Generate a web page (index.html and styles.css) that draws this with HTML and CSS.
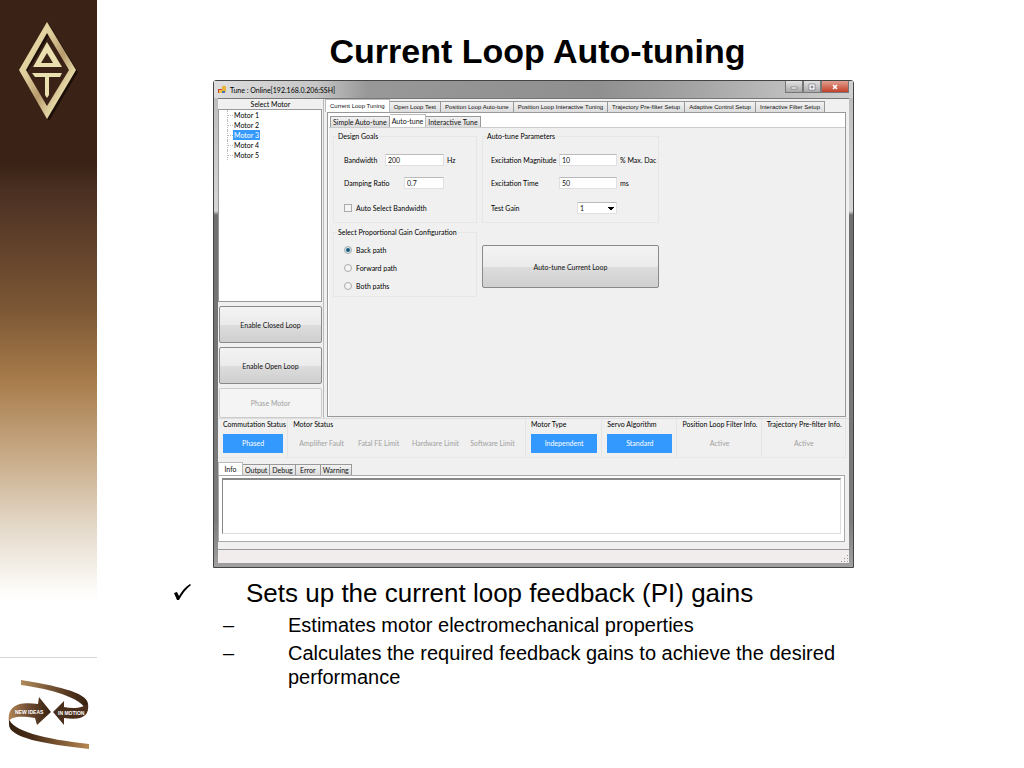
FILE: index.html
```html
<!DOCTYPE html>
<html lang="en">
<head>
    <meta charset="UTF-8">
    <meta name="viewport" content="width=device-width, initial-scale=1.0">
    <title>Current Loop Auto-tuning</title>
    <link rel="stylesheet" href="styles.css">
</head>
<body>
<div class="slide">
    <aside class="brand">
        <div class="brand-top">
            <svg class="logo" viewBox="0 0 60 102" role="img" aria-label="AT logo">
                <defs>
                    <linearGradient id="gold" x1="0" y1="0" x2="1" y2="1">
                        <stop offset="0" stop-color="#f6edbb"/>
                        <stop offset="0.35" stop-color="#dccb98"/>
                        <stop offset="0.55" stop-color="#b89b6d"/>
                        <stop offset="0.8" stop-color="#f3e9b8"/>
                        <stop offset="1" stop-color="#c9b07e"/>
                    </linearGradient>
                </defs>
                <path d="M31 4 L60 52 L31 101 L3 52 Z M31 15 L9 52 L31 89 L53 52 Z" fill="#1c0f08" fill-rule="evenodd"/>
                <path d="M29 2 L58 50 L29 99 L1 50 Z M29 13 L8 50 L29 86 L51 50 Z" fill="url(#gold)" fill-rule="evenodd"/>
                <path d="M29 22 L44 47 L15 47 Z M29 33 L23 43 L35 43 Z" fill="#eadfae" fill-rule="evenodd"/>
                <path d="M14 53 L44 53 L42 57 L31 57 L31 75 L29 78 L27 75 L27 57 L17 57 Z" fill="#eadfae"/>
            </svg>
        </div>
        <div class="brand-bottom">
            <svg class="motion" viewBox="0 0 96 96" role="img" aria-label="New ideas in motion">
                <defs>
                    <linearGradient id="band1" x1="0" x2="1">
                        <stop offset="0" stop-color="#b18b5c"/>
                        <stop offset="0.7" stop-color="#54371f"/>
                        <stop offset="1" stop-color="#35200f"/>
                    </linearGradient>
                    <linearGradient id="band2" x1="0" x2="1">
                        <stop offset="0" stop-color="#35200f"/>
                        <stop offset="0.3" stop-color="#4a2d18"/>
                        <stop offset="1" stop-color="#b58650"/>
                    </linearGradient>
                    <linearGradient id="arrow" x1="0" x2="1">
                        <stop offset="0" stop-color="#b18455"/>
                        <stop offset="0.5" stop-color="#6b4a30"/>
                        <stop offset="1" stop-color="#35200f"/>
                    </linearGradient>
                </defs>
                <path d="M21 22 C52 27 88 34 88 46 L87 53 C81 39 50 31 21 27 Z" fill="url(#band1)"/>
                <path d="M9 60 C11 73 44 81 89 86 L89 91 C45 86 8 80 9 66 Z" fill="url(#band2)"/>
                <path d="M9 64 C7 48 18 43 38 46 L39 39 L51 54 L37 67 L35 60 C22 58 10 58 9 64 Z" fill="url(#arrow)"/>
                <path d="M53 54 L64 43 L64 49 C74 51 84 50 88 45 C90 60 80 62 64 60 L64 67 Z" fill="#492e1c"/>
                <text x="15" y="56" class="motion-text">NEW IDEAS</text>
                <text x="58" y="57" class="motion-text">IN MOTION</text>
            </svg>
        </div>
    </aside>

    <main class="content">
        <h1>Current Loop Auto-tuning</h1>

        <section class="window">
            <header class="titlebar">
                <svg class="app-icon" viewBox="0 0 8 8" aria-hidden="true">
                    <rect x="0" y="3" width="4" height="4" fill="#c9463a"/>
                    <rect x="1" y="4" width="3" height="3" fill="#f0c040"/>
                    <rect x="4" y="0" width="4" height="6" fill="#e6b53a"/>
                    <rect x="4" y="5" width="3" height="2" fill="#4b73b8"/>
                </svg>
                <span class="window-title">Tune : Online[192.168.0.206:SSH]</span>
                <div class="window-buttons">
                    <button type="button" aria-label="Minimize"><svg viewBox="0 0 10 8"><path d="M2 4h6v2H2z" fill="#fff" stroke="#667" stroke-width="0.6"/></svg></button>
                    <button type="button" aria-label="Maximize"><svg viewBox="0 0 10 8"><path d="M2 1h6v6H2zM4 3h2v2H4z" fill="#fff" fill-rule="evenodd" stroke="#667" stroke-width="0.6"/></svg></button>
                    <button type="button" class="close" aria-label="Close"><svg viewBox="0 0 10 8"><path d="M3 2l4 4M7 2L3 6" stroke="#fff" stroke-width="1.6"/></svg></button>
                </div>
            </header>

            <div class="window-body">
                <div class="workspace">
                    <div class="motors">
                        <div class="motors-title">Select Motor</div>
                        <ul class="motor-list">
                            <li><span>Motor 1</span></li>
                            <li><span>Motor 2</span></li>
                            <li><span class="selected">Motor 3</span></li>
                            <li><span>Motor 4</span></li>
                            <li><span>Motor 5</span></li>
                        </ul>
                        <div class="motor-buttons">
                            <button type="button" class="big-button">Enable Closed Loop</button>
                            <button type="button" class="big-button">Enable Open Loop</button>
                            <button type="button" class="big-button" disabled>Phase Motor</button>
                        </div>
                    </div>

                    <div class="tuning">
                        <nav class="tabs outer">
                            <button type="button" class="tab active">Current Loop Tuning</button>
                            <button type="button" class="tab">Open Loop Test</button>
                            <button type="button" class="tab">Position Loop Auto-tune</button>
                            <button type="button" class="tab">Position Loop Interactive Tuning</button>
                            <button type="button" class="tab">Trajectory Pre-filter Setup</button>
                            <button type="button" class="tab">Adaptive Control Setup</button>
                            <button type="button" class="tab">Interactive Filter Setup</button>
                        </nav>
                        <div class="tab-page">
                            <nav class="tabs inner">
                                <button type="button" class="tab">Simple Auto-tune</button>
                                <button type="button" class="tab active">Auto-tune</button>
                                <button type="button" class="tab">Interactive Tune</button>
                            </nav>
                            <form class="tune-form">
                                <fieldset>
                                    <legend>Design Goals</legend>
                                    <div class="rows goals">
                                        <label for="bandwidth">Bandwidth</label>
                                        <input type="text" id="bandwidth" value="200">
                                        <span>Hz</span>
                                        <label for="damping">Damping Ratio</label>
                                        <input type="text" id="damping" class="short" value="0.7">
                                        <span></span>
                                        <label class="check"><input type="checkbox">Auto Select Bandwidth</label>
                                    </div>
                                </fieldset>
                                <fieldset>
                                    <legend>Auto-tune Parameters</legend>
                                    <div class="rows params">
                                        <label for="magnitude">Excitation Magnitude</label>
                                        <input type="text" id="magnitude" value="10">
                                        <span>% Max. Dac</span>
                                        <label for="time">Excitation Time</label>
                                        <input type="text" id="time" value="50">
                                        <span>ms</span>
                                        <label for="gain">Test Gain</label>
                                        <select id="gain" class="short"><option>1</option></select>
                                        <span></span>
                                    </div>
                                </fieldset>
                                <fieldset>
                                    <legend>Select Proportional Gain Configuration</legend>
                                    <div class="radios">
                                        <label class="check"><input type="radio" name="path" checked>Back path</label>
                                        <label class="check"><input type="radio" name="path">Forward path</label>
                                        <label class="check"><input type="radio" name="path">Both paths</label>
                                    </div>
                                </fieldset>
                                <button type="button" class="big-button run-button">Auto-tune Current Loop</button>
                            </form>
                        </div>
                    </div>
                </div>

                <div class="status">
                    <div class="status-group">
                        <h2>Commutation Status</h2>
                        <div class="cells"><span class="on">Phased</span></div>
                    </div>
                    <div class="status-group">
                        <h2>Motor Status</h2>
                        <div class="cells">
                            <span>Amplifier Fault</span>
                            <span>Fatal FE Limit</span>
                            <span>Hardware Limit</span>
                            <span>Software Limit</span>
                        </div>
                    </div>
                    <div class="status-group">
                        <h2>Motor Type</h2>
                        <div class="cells"><span class="on">Independent</span></div>
                    </div>
                    <div class="status-group">
                        <h2>Servo Algorithm</h2>
                        <div class="cells"><span class="on">Standard</span></div>
                    </div>
                    <div class="status-group">
                        <h2>Position Loop Filter Info.</h2>
                        <div class="cells"><span>Active</span></div>
                    </div>
                    <div class="status-group">
                        <h2>Trajectory Pre-filter Info.</h2>
                        <div class="cells"><span>Active</span></div>
                    </div>
                </div>

                <nav class="tabs log-tabs">
                    <button type="button" class="tab active">Info</button>
                    <button type="button" class="tab">Output</button>
                    <button type="button" class="tab">Debug</button>
                    <button type="button" class="tab">Error</button>
                    <button type="button" class="tab">Warning</button>
                </nav>
                <div class="log">
                    <textarea aria-label="Info"></textarea>
                </div>
                <footer class="statusbar">
                    <svg viewBox="0 0 8 8" aria-hidden="true"><path d="M6 0h1v1H6zM3 3h1v1H3zM6 3h1v1H6zM0 6h1v1H0zM3 6h1v1H3zM6 6h1v1H6z" fill="#999"/></svg>
                </footer>
            </div>
        </section>

        <ul class="points">
            <li class="point">
                <svg class="tick" viewBox="0 0 18 18" aria-hidden="true"><path d="M1 9 L4 8 L6 12 C9 7 12 3 17 0 L18 1 C13 5 9 10 6 16 L4 16 Z"/></svg>
                <span>Sets up the current loop feedback (PI) gains</span>
            </li>
            <li class="subpoint"><span class="dash">–</span><span>Estimates motor electromechanical properties</span></li>
            <li class="subpoint"><span class="dash">–</span><span>Calculates the required feedback gains to achieve the desired performance</span></li>
        </ul>
    </main>
</div>
</body>
</html>
```
FILE: styles.css
```css
* {
    box-sizing: border-box;
}

body {
    margin: 0;
    font-family: "Liberation Sans", Arial, sans-serif;
    background-color: #fff;
    color: #000;
}

.slide {
    display: flex;
    min-height: 100vh;
}

/* left brand strip */
.brand {
    flex: 0 0 97px;
    display: flex;
    flex-direction: column;
}

.brand-top {
    flex: 1;
    padding: 20px 0 0 18px;
    background: linear-gradient(#3a2316 0, #3a2316 25%, #4a2f22 29%, #7c5735 47%, #a87c4b 58%, #c7a985 69%, #e6dccd 81%, #fdfcf9 90%, #fff 92%);
}

.logo {
    display: block;
    width: 60px;
    height: 102px;
}

.brand-bottom {
    height: 111px;
    border-top: 1px solid #d4d4d4;
}

.motion {
    display: block;
    width: 96px;
    height: 96px;
}

.motion-text {
    font-size: 5px;
    font-weight: bold;
    fill: #fff;
}

/* slide content */
.content {
    flex: 1;
    min-width: 0;
    padding: 30px 170px 0 76px;
}

h1 {
    margin: 0 0 8px 48px;
    font-size: 34px;
    line-height: 42px;
    text-align: center;
}

.window {
    margin-left: 40px;
    padding: 0 4px 4px;
    border: 1px solid #444;
    border-radius: 3px 3px 0 0;
    background: linear-gradient(#b9b9b9 0, #d6d6d6 130px, #707070 134px, #7c7c7c 440px, #a0a0a0 100%);
    font-family: Lato, "Liberation Sans", sans-serif;
    font-size: 7px;
    line-height: 10px;
}

.titlebar {
    display: flex;
    align-items: center;
    height: 17px;
    margin: 0 -4px;
    padding: 0 4px;
    background: linear-gradient(90deg, #dedede 0, #c6c6c6 16%, #989898 24%, #8f8f8f 60%, #a4a4a4 75%, #d0d0d0 100%);
}

.app-icon {
    width: 8px;
    height: 8px;
    margin-right: 4px;
}

.window-title {
    flex: 1;
}

.window-buttons {
    display: flex;
    align-self: flex-start;
}

.window-buttons button {
    display: flex;
    align-items: center;
    justify-content: center;
    width: 18px;
    height: 12px;
    padding: 0;
    border: 1px solid #777;
    border-top: 0;
    background: linear-gradient(#e2e2e2, #aaa);
}

.window-buttons .close {
    width: 28px;
    background: linear-gradient(#e0a090, #c4402a);
}

.window-buttons svg {
    width: 10px;
    height: 8px;
}

.window-body {
    background-color: #f0f0f0;
}

.window button,
.window input,
.window select {
    font-family: inherit;
    font-size: inherit;
    line-height: 10px;
    color: #111;
}

.workspace {
    display: flex;
    height: 320px;
    border-top: 1px solid #777;
}

.motors {
    display: flex;
    flex-direction: column;
    flex: 0 0 106px;
    border-right: 1px solid #bbb;
}

.motors-title {
    text-align: center;
}

.motor-list {
    flex: 1;
    margin: 0 1px 0 0;
    padding: 0 0 0 8px;
    border: 1px solid #999;
    background-color: #fff;
    list-style: none;
}

.motor-list li {
    display: flex;
    align-items: center;
    height: 10px;
    border-left: 1px dotted #bbb;
}

.motor-list li::before {
    content: "";
    width: 5px;
    border-top: 1px dotted #bbb;
}

.motor-list .selected {
    background-color: #3399ff;
    color: #fff;
}

.motor-list span {
    padding: 0 1px;
}

.motor-buttons {
    display: grid;
    grid-template-rows: 37px 37px 30px;
    gap: 4px;
    padding: 4px 1px 0;
}

.big-button {
    border: 1px solid #8a8a8a;
    border-radius: 2px;
    background: linear-gradient(#f3f3f3 0, #ebebeb 50%, #dddddd 51%, #cfcfcf 100%);
}

.window .big-button:disabled {
    border-color: #ccc;
    background: #f4f4f4;
    color: #a0a0a0;
}

.tuning {
    display: flex;
    flex-direction: column;
    flex: 1;
    min-width: 0;
    padding: 0 3px 2px 1px;
}

/* tabs */
.tabs {
    display: flex;
    align-items: flex-end;
    height: 13px;
}

.tab {
    height: 11px;
    padding: 0 3px;
    border: 1px solid #999;
    border-bottom: 0;
    border-left-width: 0;
    background: linear-gradient(#f2f2f2, #dcdcdc);
    white-space: nowrap;
}

.tab:first-child {
    border-left-width: 1px;
}

.tab.active {
    height: 13px;
    border-color: #bbb;
    background: #fff;
}

.tabs.outer {
    font-family: "Liberation Sans", Arial, sans-serif;
    font-size: 6px;
}

.outer .tab {
    padding: 0 4px;
}

.tab-page {
    flex: 1;
    margin-left: 2px;
    padding: 1px 0 0 1px;
    border: 1px solid #999;
    background-color: #fff;
}

.tabs.inner {
    padding-left: 1px;
}

.inner .tab {
    padding: 0 2px;
}

.tune-form {
    display: grid;
    grid-template-columns: 144px 177px;
    grid-template-rows: 92px 70px;
    gap: 4px 5px;
    height: 289px;
    padding: 3px 4px;
    border-top: 1px solid #ccc;
    background-color: #f0f0f0;
}

fieldset {
    min-width: 0;
    margin: 0;
    padding: 0;
    border: 1px solid #e6e6e6;
}

legend {
    margin-left: 3px;
    padding: 0 1px;
}

.rows {
    display: grid;
    grid-template-rows: 24px 22px 28px;
    align-items: center;
    padding-top: 7px;
}

.goals {
    grid-template-columns: 41px 59px 1fr;
    padding-left: 10px;
}

.params {
    grid-template-columns: 68px 58px 1fr;
    padding-left: 8px;
}

.rows label,
.rows span {
    white-space: nowrap;
}

.rows span {
    padding-left: 3px;
}

.window input[type="text"],
.window select {
    width: 100%;
    height: 12px;
    padding: 0 2px;
    border: 1px solid #e0e0e0;
    border-top-color: #bbb;
    border-radius: 0;
    background-color: #fff;
}

.window input.short,
.window select.short {
    width: 40px;
    justify-self: end;
}

.window select {
    appearance: none;
    background: #fff conic-gradient(from -45deg at 50% 100%, #000 90deg, transparent 0) no-repeat right 2px center / 6px 3px;
}

.check {
    display: flex;
    align-items: center;
    grid-column: 1 / -1;
    gap: 4px;
}

.check input {
    appearance: none;
    width: 8px;
    height: 8px;
    margin: 0;
    border: 1px solid #aaa;
    background-color: #f4f4f4;
}

.check input[type="radio"] {
    border-radius: 50%;
}

.check input[type="radio"]:checked {
    background: radial-gradient(#10405c 0, #2a6a8c 35%, #cfe6f2 60%);
}

.radios {
    display: grid;
    grid-auto-rows: 18px;
    padding: 4px 0 0 10px;
}

.run-button {
    align-self: start;
    height: 43px;
    margin-top: 18px;
}

/* status row */
.status {
    display: grid;
    grid-template-columns: minmax(0, 70fr) minmax(0, 237fr) minmax(0, 76fr) minmax(0, 75fr) minmax(0, 84fr) minmax(0, 84fr);
    height: 44px;
    padding: 0 3px 4px 0;
    border-top: 1px solid #ddd;
}

.status-group {
    padding: 0 4px 0 5px;
    border-right: 1px solid #e4e4e4;
    border-bottom: 1px solid #e8e8e8;
}

.status-group h2 {
    margin: 0 0 5px;
    font-size: 7px;
    font-weight: normal;
    line-height: 10px;
    white-space: nowrap;
}

.cells {
    display: flex;
    color: #a0a0a0;
}

.cells span {
    flex: 1;
    line-height: 19px;
    text-align: center;
    white-space: nowrap;
}

.cells .on {
    background-color: #3399ff;
    color: #fff;
}

/* log */
.log-tabs .tab {
    padding: 0 2px;
    min-width: 25px;
}

.log {
    height: 67px;
    margin-right: 4px;
    padding: 2px 3px;
    border: 1px solid #aaa;
    background-color: #fff;
}

.log textarea {
    display: block;
    width: 100%;
    height: 56px;
    border: 1px solid #ddd;
    border-top: 2px solid #888;
    border-left-color: #888;
    resize: none;
}

.statusbar {
    display: flex;
    align-items: flex-end;
    justify-content: flex-end;
    height: 14px;
    margin-top: 7px;
    border-top: 1px solid #999;
    background-color: #f1eded;
}

.statusbar svg {
    width: 8px;
    height: 8px;
}

/* bullets */
.points {
    margin: 9px 0 0;
    padding: 0;
    list-style: none;
}

.point {
    display: flex;
    align-items: center;
    font-size: 26px;
    line-height: 32px;
}

.tick {
    width: 18px;
    height: 18px;
    margin-right: 55px;
}

.subpoint {
    display: flex;
    margin-top: 4px;
    padding-left: 50px;
    font-size: 20px;
    line-height: 24px;
}

.dash {
    flex: 0 0 65px;
}
```
